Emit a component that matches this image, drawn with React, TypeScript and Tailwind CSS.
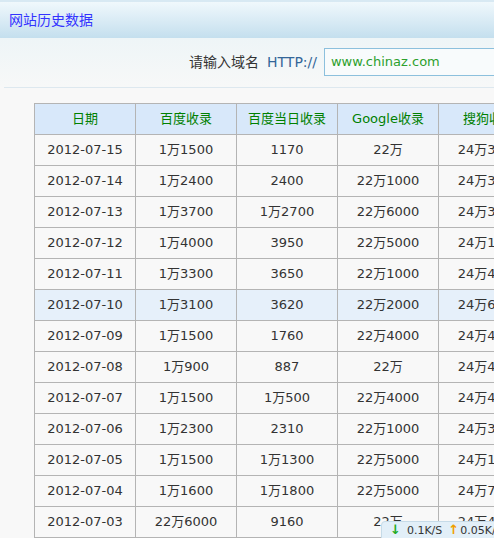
const rows: [string, string, string, string, string][] = [
  ["2012-07-15", "1万1500", "1170", "22万", "24万3000"],
  ["2012-07-14", "1万2400", "2400", "22万1000", "24万3500"],
  ["2012-07-13", "1万3700", "1万2700", "22万6000", "24万3200"],
  ["2012-07-12", "1万4000", "3950", "22万5000", "24万1000"],
  ["2012-07-11", "1万3300", "3650", "22万1000", "24万4000"],
  ["2012-07-10", "1万3100", "3620", "22万2000", "24万6000"],
  ["2012-07-09", "1万1500", "1760", "22万4000", "24万4500"],
  ["2012-07-08", "1万900", "887", "22万", "24万4200"],
  ["2012-07-07", "1万1500", "1万500", "22万4000", "24万4100"],
  ["2012-07-06", "1万2300", "2310", "22万1000", "24万3800"],
  ["2012-07-05", "1万1500", "1万1300", "22万5000", "24万1500"],
  ["2012-07-04", "1万1600", "1万1800", "22万5000", "24万7000"],
  ["2012-07-03", "22万6000", "9160", "22万", "24万4000"],
];

const heads = ["日期", "百度收录", "百度当日收录", "Google收录", "搜狗收录"];

export default function App() {
  return (
    <div
      className="relative h-[538px] w-[494px] overflow-hidden bg-[#f8f8f8] text-[#333]"
      style={{ fontFamily: '"DejaVu Sans", "Noto Sans CJK SC", sans-serif' }}
    >
      {/* title bar */}
      <div className="flex h-[38px] w-[700px] items-center border-t-2 border-[#d8e9f3] bg-gradient-to-b from-[#f0f8fc] to-[#c4dfee] pl-[9px]">
        <span className="text-[14px] text-[#3333ff]">网站历史数据</span>
      </div>

      {/* domain input */}
      <div className="bg-gradient-to-b from-[#eef5f7] to-[#f7f8f8] pb-[11px] pt-[10px]">
        <div className="flex h-[28px] w-[700px] items-center pl-[189px]">
          <span className="text-[14px] text-[#333]">请输入域名</span>
          <span className="ml-[8px] text-[14px] text-[#336699]">HTTP://</span>
          <div className="ml-[7px] flex h-[28px] w-[300px] items-center border border-[#8cc0dd] bg-[#f8fbfc] pl-[6px]">
            <span className="text-[13px] font-medium text-[#2ca02c]">www.chinaz.com</span>
          </div>
        </div>
      </div>
      <div className="ml-[4px] h-px w-[700px] bg-[#dde8ef]" />

      {/* history table */}
      <div className="ml-[34px] mt-[15px] w-[700px]">
        <table className="border-collapse text-[13px]">
          <thead>
            <tr>
              {heads.map((h) => (
                <th key={h} className="h-[31px] w-[101px] border border-[#b4b4b4] bg-[#d8e8fa] p-0 text-center font-normal text-[#008000]">
                  {h}
                </th>
              ))}
            </tr>
          </thead>
          <tbody>
            {rows.map((r) => {
              const hl = r[0] === "2012-07-10";
              return (
                <tr key={r[0]} className={hl ? "bg-[#e6f0fa]" : ""}>
                  {r.map((c, i) => (
                    <td key={i} className="h-[31px] w-[101px] border border-[#b4b4b4] p-0 text-center">
                      {c}
                    </td>
                  ))}
                </tr>
              );
            })}
          </tbody>
        </table>
      </div>

      {/* network speed widget */}
      <div className="absolute left-[381px] top-[521px] flex h-[24px] w-[140px] items-start rounded-tl-[4px] border border-[#c6dbe8] bg-[#e2eff8] pl-[8px] pt-[1px] text-[11px]">
        <span className="text-[13px] font-bold leading-[14px] text-[#22aa22]">↓</span>
        <span className="ml-[6px] text-[#333]">0.1K/S</span>
        <span className="ml-[6px] text-[13px] font-bold leading-[14px] text-[#f0a000]">↑</span>
        <span className="ml-[1px] text-[#333]">0.05K/S</span>
      </div>
    </div>
  );
}
